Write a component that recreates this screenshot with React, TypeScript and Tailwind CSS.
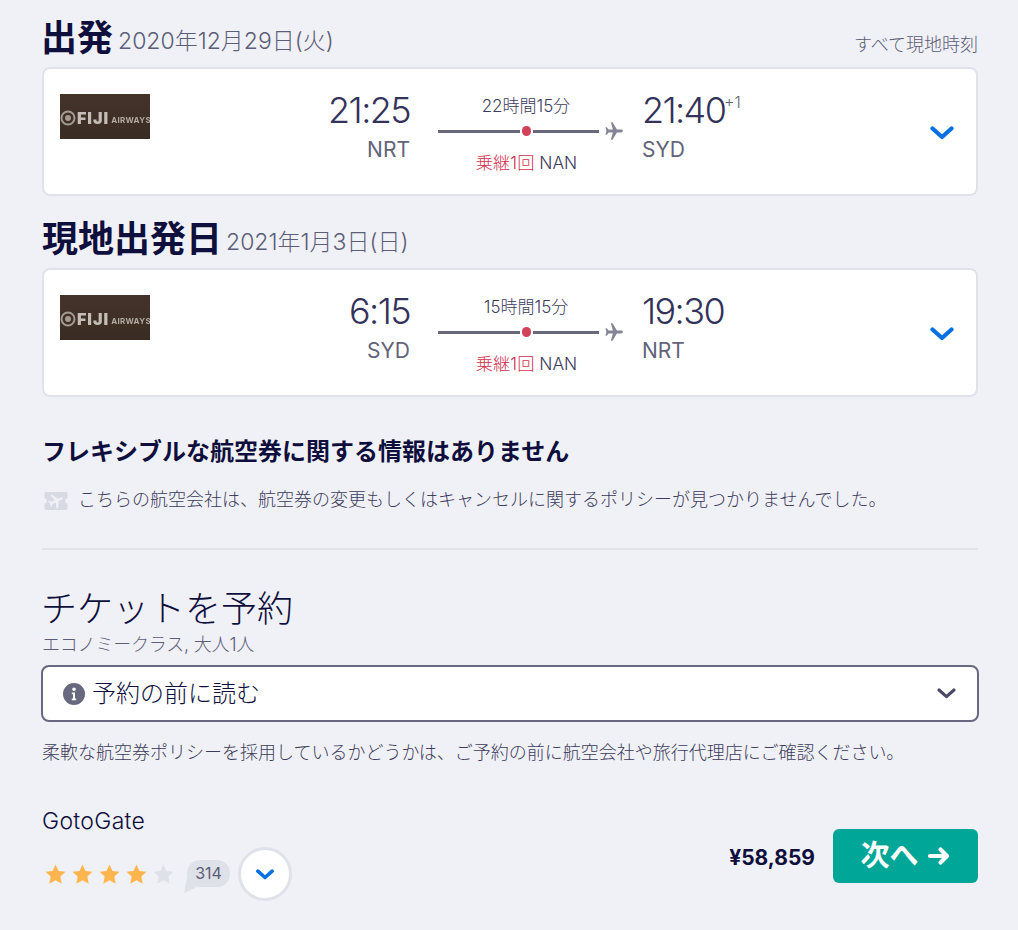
import React from "react";

const font = { fontFamily: '"Inter", "Noto Sans CJK JP", sans-serif' };

function Chevron({ className, sw = 3.6 }: { className?: string; sw?: number }) {
  return (
    <svg viewBox="0 0 24 14" className={className} fill="none" stroke="currentColor" strokeWidth={sw} strokeLinecap="round" strokeLinejoin="round">
      <path d="M2.5 2.5 L12 11 L21.5 2.5" />
    </svg>
  );
}

const planePath = "M19 10c0-.9-1-1.400-2-1.400h-4L8.600 1.200H6.900l2 7.400H4.600L2.800 6.300H1.500l.9 3.700-.9 3.700h1.300l1.800-2.300h4.300l-2 7.400h1.700L13 11.400h4c1 0 2-.5 2-1.400z";

function Plane({ className }: { className?: string }) {
  return (
    <svg viewBox="0 0 20 20" className={className} fill="currentColor">
      <path d={planePath} />
    </svg>
  );
}

function Logo() {
  return (
    <div className="w-[90px] h-[45px] bg-gradient-to-b from-[#44332a] to-[#3a2c22] flex items-center overflow-hidden shrink-0 pt-[3px]">
      <svg viewBox="0 0 16 16" className="w-[16px] h-[16px] text-[#a39b92] shrink-0 blur-[0.5px]" fill="none" stroke="currentColor" strokeWidth="2">
        <circle cx="8" cy="8" r="6.500" />
        <circle cx="8" cy="8" r="2" fill="currentColor" />
      </svg>
      <span className="text-[16px] font-black text-[#c4beb6] leading-none ml-[1px] tracking-[1px] blur-[0.5px]">FIJI</span>
      <span className="text-[8px] font-bold text-[#b3aca3] leading-none ml-[2px] mt-[3px] tracking-[0.3px] blur-[0.4px] whitespace-nowrap">AIRWAYS</span>
    </div>
  );
}

function FlightCard(p: { dep: string; from: string; dur: string; arr: string; to: string; plus?: string }) {
  return (
    <div className="h-[129px] bg-white rounded-[8px] border-2 border-[#e0e2e9] flex pl-[16px] pt-[25px] relative">
      <Logo />
      <div className="w-[260px] text-right shrink-0">
        <div className="text-[36px] leading-[38px] tracking-[-1.6px] font-light text-[#33325a] -mt-[3px]">{p.dep}</div>
        <div className="text-[21px] leading-[24px] text-[#626379] mt-[9px]">{p.from}</div>
      </div>
      <div className="w-[186px] ml-[28px] shrink-0 flex flex-col items-start mt-[1px]">
        <div className="w-[176px] text-center text-[17px] leading-[22px] text-[#3d3c5c] h-[22px] font-light">{p.dur}</div>
        <div className="flex items-center w-[186px] mt-[8px] h-[12px]">
          <div className="w-[82px] h-[3px] bg-[#68697f]" />
          <div className="w-[10px] h-[10px] rounded-full bg-[#d1435b] ml-[2px]" />
          <div className="w-[66px] h-[3px] bg-[#68697f] ml-[2px]" />
          <Plane className="w-[20px] h-[20px] text-[#858598] ml-[5px]" />
        </div>
        <div className="w-[177px] text-center text-[17.3px] leading-[22px] mt-[15px] whitespace-nowrap font-light">
          <span className="text-[#d1304f]">乗継1回</span>
          <span className="text-[#3d3c5c]"> NAN</span>
        </div>
      </div>
      <div className="ml-[18px] w-[200px] shrink-0">
        <div className="text-[36px] leading-[38px] tracking-[-1.6px] font-light text-[#33325a] -mt-[3px] relative">
          {p.arr}
          {p.plus && <span className="absolute top-[1px] left-[82px] text-[16px] leading-[20px] tracking-normal text-[#626379] font-light">{p.plus}</span>}
        </div>
        <div className="text-[21px] leading-[24px] text-[#626379] mt-[9px]">{p.to}</div>
      </div>
      <Chevron sw={4.2} className="absolute right-[22px] top-[57px] w-[24px] h-[14px] text-[#0770e3]" />
    </div>
  );
}

function Star({ on }: { on: boolean }) {
  return (
    <svg viewBox="0 0 24 24" className={`w-[23px] h-[23px] mr-[4px] ${on ? "text-[#ffb54d]" : "text-[#dfe1e8]"}`} fill="currentColor">
      <path d="M12 1.500l3.100 6.900 7.400.8-5.500 5 1.500 7.400L12 17.900l-6.500 3.700L7 14.200l-5.500-5 7.400-.8z" />
    </svg>
  );
}

export default function App() {
  return (
    <div style={font} className="w-[1018px] h-[930px] bg-[#f0f1f7] pl-[42px] pr-[40px] overflow-hidden">
      <div className="flex items-end h-[67px] pb-[5px]">
        <span className="text-[36px] leading-[48px] font-bold text-[#0f0f3d] -ml-[1px]">出発</span>
        <span className="text-[23px] leading-[36px] text-[#5c5d77] ml-[5px] font-light mb-[3px]">2020年12月29日(火)</span>
        <span className="ml-auto text-[18px] leading-[24px] text-[#5c5d77] font-light mb-[5px]">すべて現地時刻</span>
      </div>
      <FlightCard dep="21:25" from="NRT" dur="22時間15分" arr="21:40" to="SYD" plus="+1" />
      <div className="flex items-end h-[72px] pb-[5px]">
        <span className="text-[36px] leading-[48px] font-bold text-[#0f0f3d]">現地出発日</span>
        <span className="text-[23px] leading-[36px] text-[#5c5d77] ml-[4px] font-light mb-[3px]">2021年1月3日(日)</span>
      </div>
      <FlightCard dep="6:15" from="SYD" dur="15時間15分" arr="19:30" to="NRT" />
      <div className="text-[24px] leading-[32px] font-bold text-[#0f0f3d] mt-[39px]">フレキシブルな航空券に関する情報はありません</div>
      <div className="flex items-center mt-[20px] h-[24px]">
        <svg viewBox="0 0 24 20" className="w-[24px] h-[20px] shrink-0 ml-[2px] mt-[2px]">
          <path className="fill-[#d8dae3]" d="M2 1h20a1.500 1.500 0 0 1 1.500 1.500V7.500a2.500 2.500 0 0 0 0 5v5A1.500 1.500 0 0 1 22 19H2a1.500 1.500 0 0 1-1.500-1.500v-5a2.500 2.500 0 0 0 0-5V2.500A1.500 1.500 0 0 1 2 1z" />
          <g transform="rotate(-25 12 10) translate(3.500 1.500) scale(0.85)">
            <path className="fill-[#f0f1f7]" d={planePath} />
          </g>
        </svg>
        <span className="text-[18px] leading-[24px] text-[#3d3c5c] ml-[10px] whitespace-nowrap font-light">こちらの航空会社は、航空券の変更もしくはキャンセルに関するポリシーが見つかりませんでした。</span>
      </div>
      <div className="h-[2px] bg-[#e0e2e9] mt-[36px]" />
      <div className="text-[36px] leading-[44px] text-[#0f0f3d] mt-[37px] -ml-[1px] font-light">チケットを予約</div>
      <div className="text-[18px] leading-[22px] text-[#5c5d77] mt-[3px] tracking-[-0.2px] font-light">エコノミークラス, 大人1人</div>
      <div className="h-[57px] -ml-[1px] w-[938px] mt-[9px] bg-white rounded-[8px] border-2 border-[#68697f] flex items-center pl-[19px] pr-[21px]">
        <svg viewBox="0 0 24 24" className="w-[24px] h-[24px] text-[#68697f] shrink-0" fill="currentColor">
          <path fillRule="evenodd" d="M12 1a11 11 0 1 1 0 22 11 11 0 0 1 0-22zm0 4.500a1.800 1.800 0 1 0 0 3.600 1.800 1.800 0 0 0 0-3.600zM9.800 10.500v1.800h1.200v4.200H9.800v1.800h4.400v-1.800H13v-6z" />
        </svg>
        <span className="text-[24px] leading-[30px] text-[#0f0f3d] ml-[6px] font-light">予約の前に読む</span>
        <Chevron sw={4} className="ml-auto w-[19px] h-[11px] text-[#4b4a68]" />
      </div>
      <div className="text-[18px] leading-[24px] text-[#3d3c5c] mt-[19px] whitespace-nowrap font-light">柔軟な航空券ポリシーを採用しているかどうかは、ご予約の前に航空会社や旅行代理店にご確認ください。</div>
      <div className="flex items-start mt-[42px]">
        <div className="flex-1">
          <div className="text-[23px] tracking-[0.3px] leading-[28px] text-[#0f0f3d] font-light">GotoGate</div>
          <div className="flex items-center mt-[12px] ml-[2px]">
            <Star on /><Star on /><Star on /><Star on /><Star on={false} />
            <div className="relative ml-[8px] h-[27px] w-[43px] bg-[#dfe1e8] rounded-[13px] text-[16px] leading-[27px] text-center text-[#5c5d77] -mt-[1px]">
              314
              <div className="absolute -left-[3px] bottom-[-6px] w-[12px] h-[16px] bg-[#dfe1e8] [clip-path:polygon(25%_0,100%_65%,0_100%)]" />
            </div>
            <div className="ml-[8px] w-[54px] h-[54px] rounded-full bg-white border-[3px] border-[#e0e2e9] flex items-center justify-center shrink-0">
              <Chevron sw={4.8} className="w-[18px] h-[11px] text-[#0770e3]" />
            </div>
          </div>
        </div>
        <div className="flex items-center mt-[22px]">
          <span className="text-[21px] font-bold text-[#0f0f3d] mr-[18px] mt-[3px]">¥58,859</span>
          <div className="w-[145px] h-[54px] bg-[#00a698] rounded-[6px] flex items-center justify-center text-white">
            <span className="text-[29px] leading-[34px] font-bold">次へ</span>
            <svg viewBox="0 0 24 24" className="w-[24px] h-[24px] ml-[8px]" fill="none" stroke="currentColor" strokeWidth="4.200" strokeLinecap="round" strokeLinejoin="round">
              <path d="M3 12h17M13.500 5.500L20 12l-6.500 6.500" />
            </svg>
          </div>
        </div>
      </div>
    </div>
  );
}
